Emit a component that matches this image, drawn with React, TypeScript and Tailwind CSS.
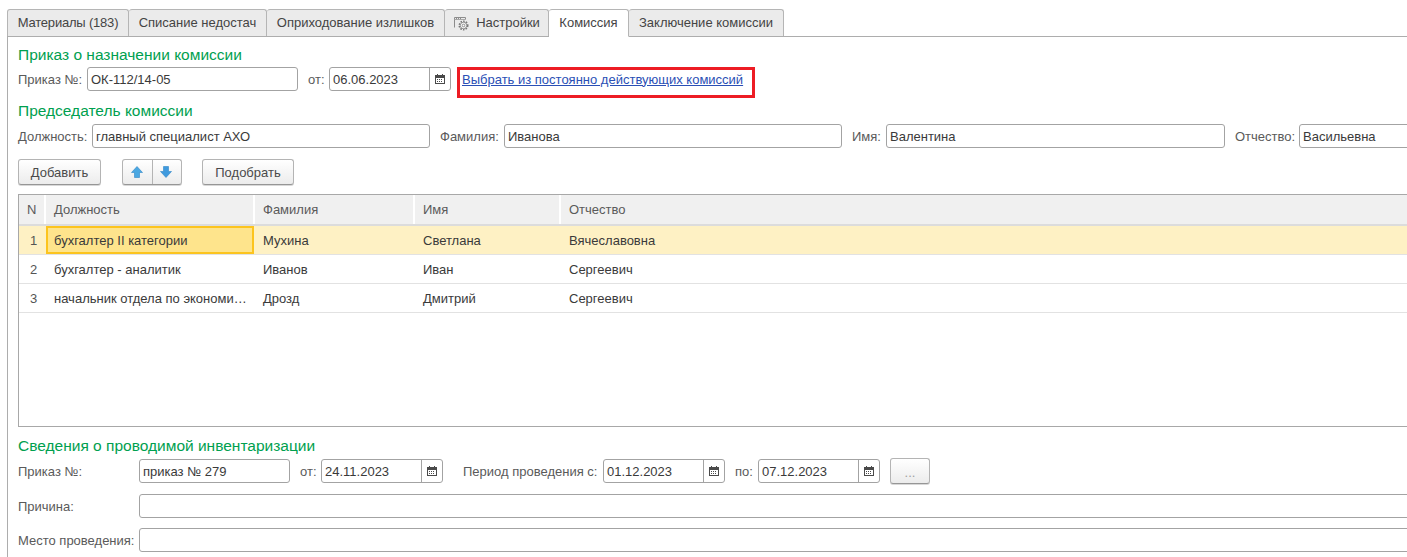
import React from "react";

function Calendar() {
  return (
    <svg width="10" height="10" viewBox="0 0 10 10" className="block">
      <rect x="0.5" y="1.5" width="9" height="8" fill="#fff" stroke="#4a4a4a" />
      <rect x="0" y="1" width="10" height="3" fill="#4a4a4a" />
      <rect x="2" y="0" width="1" height="2" fill="#4a4a4a" />
      <rect x="7" y="0" width="1" height="2" fill="#4a4a4a" />
      <path d="M2 5h1v1H2zM4 5h1v1H4zM6 5h1v1H6zM2 7h1v1H2zM4 7h1v1H4zM6 7h1v1H6z" fill="#4a4a4a" />
    </svg>
  );
}

function Gear() {
  return (
    <svg width="17" height="17" viewBox="0 0 17 17" className="block" fill="none">
      <path d="M1.5 12.5V2.5h11v2" stroke="#8c8c8c" />
      <path d="M1.5 4.5h11" stroke="#a8a8a8" />
      <path d="M3 3.5h1M5 3.5h1M7 3.5h1" stroke="#8c8c8c" />
      <circle cx="10.5" cy="10.5" r="4.2" stroke="#777" strokeWidth="1.6" strokeDasharray="1.6 1.1" fill="#fff" />
      <circle cx="10.5" cy="10.5" r="3.2" stroke="#8a8a8a" strokeWidth="1" />
      <circle cx="10.5" cy="10.5" r="1.3" stroke="#8a8a8a" strokeWidth="1" />
    </svg>
  );
}

function Arrow({ down }: { down?: boolean }) {
  return (
    <svg width="12" height="12" viewBox="0 0 12 12" className="block">
      <path
        d={down ? "M3.5 0.5h5v5h3L6 11.5 0.5 5.5h3z" : "M6 0.5l5.5 6h-3v5h-5v-5h-3z"}
        fill={down ? "#3f9ade" : "#4ba8e2"}
        stroke="#2f86c8"
        strokeWidth="0.6"
      />
    </svg>
  );
}

function Field({ w, value = "" }: { w: string; value?: string }) {
  return (
    <div className={`${w} pl-[3px] pt-px h-[24px] shrink-0 flex items-center border border-[#a3a3a3] rounded-[3px] bg-white text-[#3a3a3a] overflow-hidden whitespace-nowrap`}>
      {value}
    </div>
  );
}

function DateField({ value }: { value: string }) {
  return (
    <div className="w-[122px] h-[24px] shrink-0 flex items-center border border-[#a3a3a3] rounded-[3px] bg-white text-[#3a3a3a]">
      <span className="flex-1 pl-[3px] pt-px">{value}</span>
      <span className="w-[21px] h-full flex items-center justify-center border-l border-[#a3a3a3]">
        <Calendar />
      </span>
    </div>
  );
}

function Button({ w, children }: { w: string; children: React.ReactNode }) {
  return (
    <div className={`${w} h-[26px] pt-px shrink-0 flex items-center justify-center border border-[#b4b4b4] border-b-[#969696] rounded-[3px] bg-gradient-to-b from-white to-[#ececec] text-[#4a4a4a] shadow-[0_1px_0_#d8d8d8]`}>
      {children}
    </div>
  );
}

function Label({ className = "", children }: { className?: string; children: React.ReactNode }) {
  return <span className={`text-[#5a5a5a] whitespace-nowrap shrink-0 pt-px ${className}`}>{children}</span>;
}

function Heading({ children, className = "" }: { children: React.ReactNode; className?: string }) {
  return <div className={`text-[15.5px] leading-[18px] text-[#00a04f] whitespace-nowrap ${className}`}>{children}</div>;
}

const tabs: { label: string; w: string; active?: boolean; gear?: boolean; extra?: string }[] = [
  { label: "Материалы (183)", w: "w-[122px]", extra: "tracking-[-0.2px]" },
  { label: "Списание недостач", w: "w-[138px]" },
  { label: "Оприходование излишков", w: "w-[178px]" },
  { label: "Настройки", w: "w-[104px]", gear: true },
  { label: "Комиссия", w: "w-[80px]", active: true },
  { label: "Заключение комиссии", w: "w-[155px]" },
];

const columns = ["w-[27px]", "w-[209px]", "w-[160px]", "w-[146px]", "flex-1"];
const headers = ["N", "Должность", "Фамилия", "Имя", "Отчество"];
const rows = [
  ["1", "бухгалтер II категории", "Мухина", "Светлана", "Вячеславовна"],
  ["2", "бухгалтер - аналитик", "Иванов", "Иван", "Сергеевич"],
  ["3", "начальник отдела по экономи…", "Дрозд", "Дмитрий", "Сергеевич"],
];

export default function App() {
  return (
    <div className="w-[1407px] h-[557px] overflow-hidden bg-white pt-[9px] pl-[7px] text-[13px] leading-[14px] font-['Liberation_Sans',Arial,sans-serif]">
      <div className="flex h-[28px] relative z-10">
        {tabs.map((t) => (
          <div
            key={t.label}
            className={`${t.w} ${t.extra ?? ""} shrink-0 flex items-center justify-center gap-[6px] border border-l-0 first:border-l border-[#b5b5b5] rounded-t-[3px] text-[#444] ${
              t.active ? "bg-white border-b-white h-[28px]" : "bg-[#ebebeb] h-[27px] border-b-0"
            }`}
          >
            {t.gear && <Gear />}
            {t.label}
          </div>
        ))}
      </div>
      <div className="-mt-px w-[1400px] h-[521px] border-l border-t border-[#adadad] pl-[10px]">
        <Heading className="mt-[9px]">Приказ о назначении комиссии</Heading>
        <div className="flex items-center mt-[3px] h-[24px]">
          <Label className="w-[69px]">Приказ №:</Label>
          <Field w="w-[211px]" value="ОК-112/14-05" />
          <Label className="ml-[10px] w-[21px]">от:</Label>
          <DateField value="06.06.2023" />
          <div className="relative ml-[11px] h-[24px] flex items-center pt-px">
            <a className="text-[#2a4fb5] underline whitespace-nowrap">Выбрать из постоянно действующих комиссий</a>
            <span className="absolute left-[-5px] top-0 w-[298px] h-[31px] border-[3px] border-[#ed1c24]" />
          </div>
        </div>
        <Heading className="mt-[11px]">Председатель комиссии</Heading>
        <div className="flex items-center mt-[4px] h-[24px]">
          <Label className="w-[74px]">Должность:</Label>
          <Field w="w-[338px]" value="главный специалист АХО" />
          <Label className="ml-[10px] w-[64px]">Фамилия:</Label>
          <Field w="w-[338px]" value="Иванова" />
          <Label className="ml-[10px] w-[34px]">Имя:</Label>
          <Field w="w-[339px]" value="Валентина" />
          <Label className="ml-[10px] w-[64px]">Отчество:</Label>
          <Field w="w-[200px]" value="Васильевна" />
        </div>
        <div className="flex items-center mt-[11px] h-[26px]">
          <Button w="w-[83px]">Добавить</Button>
          <div className="ml-[21px] w-[60px] h-[26px] flex border border-[#b4b4b4] border-b-[#969696] rounded-[3px] bg-gradient-to-b from-white to-[#ececec] shadow-[0_1px_0_#d8d8d8]">
            <span className="w-[30px] flex items-center justify-center border-r border-[#b4b4b4] pr-[2px]"><Arrow /></span>
            <span className="flex-1 flex items-center justify-center pr-[2px]"><Arrow down /></span>
          </div>
          <div className="ml-[20px]"><Button w="w-[92px]">Подобрать</Button></div>
        </div>
        <div className="mt-[9px] h-[233px] w-[1400px] border border-[#a8a8a8]">
          <div className="flex h-[31px] border-b-2 border-[#dcdcdc]">
            {headers.map((h, i) => (
              <div key={h} className={`${columns[i]} ${i === 4 ? "" : "shrink-0 border-r-2 border-white"} bg-[#f0f0f0] flex items-center text-[#5a5a5a] pl-[8px]`}>
                {h}
              </div>
            ))}
          </div>
          {rows.map((r, ri) => (
            <div key={r[0]} className={`flex h-[29px] border-b border-[#e2e2e2] ${ri === 0 ? "bg-[#fef1c4]" : "bg-white"}`}>
              {r.map((c, i) => (
                <div
                  key={i}
                  className={`${columns[i]} ${i === 4 ? "" : "shrink-0"} pt-px flex items-center whitespace-nowrap text-[#3a3a3a] pl-[8px] ${
                    ri === 0 && i === 1 ? "bg-[#fee48c] border-2 border-[#fcc41e] !pl-[6px] mr-px !w-[208px]" : ""
                  } ${i === 0 ? "justify-center !pl-[2px] text-[#555]" : ""}`}
                >
                  {c}
                </div>
              ))}
            </div>
          ))}
        </div>
        <Heading className="mt-[10px]">Сведения о проводимой инвентаризации</Heading>
        <div className="flex items-center mt-[3px] h-[26px]">
          <Label className="w-[121px]">Приказ №:</Label>
          <Field w="w-[151px]" value="приказ № 279" />
          <Label className="ml-[10px] w-[21px]">от:</Label>
          <DateField value="24.11.2023" />
          <Label className="ml-[20px] w-[140px]">Период проведения с:</Label>
          <DateField value="01.12.2023" />
          <Label className="ml-[10px] w-[23px]">по:</Label>
          <DateField value="07.12.2023" />
          <div className="ml-[10px]"><Button w="w-[40px]"><span className="text-[#a0a0a0] pt-[3px]">...</span></Button></div>
        </div>
        <div className="flex items-center mt-[10px] h-[24px]">
          <Label className="w-[121px]">Причина:</Label>
          <Field w="w-[1300px]" />
        </div>
        <div className="flex items-center mt-[10px] h-[24px]">
          <Label className="w-[121px]">Место проведения:</Label>
          <Field w="w-[1300px]" />
        </div>
      </div>
    </div>
  );
}
